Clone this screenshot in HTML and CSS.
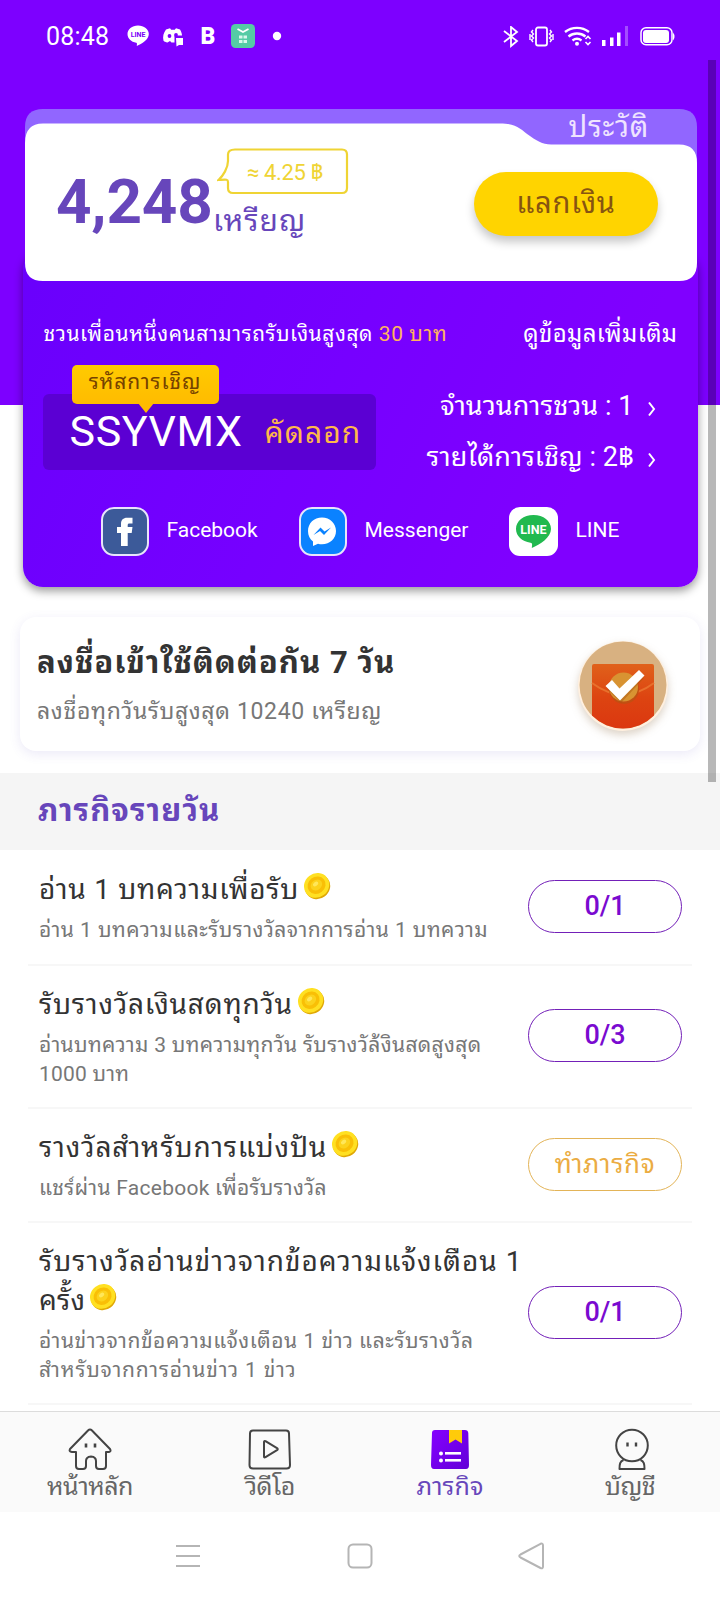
FILE: index.html
```html
<!DOCTYPE html>
<html lang="th">
<head>
<meta charset="utf-8">
<title>ภารกิจ</title>
<link rel="stylesheet" href="styles.css">
</head>
<body>
<svg class="defs" width="0" height="0">
  <defs>
    <symbol id="coin" viewBox="0 0 28 28">
      <ellipse cx="14.6" cy="14.8" rx="13" ry="12" transform="rotate(-38 14.6 14.8)" fill="#e0a806"/>
      <ellipse cx="13.6" cy="13.4" rx="13" ry="12" transform="rotate(-38 13.6 13.4)" fill="#ffe022"/>
      <ellipse cx="13.6" cy="13.2" rx="9.4" ry="8.4" transform="rotate(-38 13.6 13.2)" fill="#f9bf06"/>
      <ellipse cx="13.4" cy="13" rx="6.2" ry="5" transform="rotate(-38 13.4 13)" fill="#fcd21c"/>
      <ellipse cx="12.6" cy="12" rx="3" ry="2" transform="rotate(-38 12.6 12)" fill="#ffe75a"/>
    </symbol>
  </defs>
</svg>
<div class="phone">
  <header class="status">
    <span class="clock">08:48</span>
    <svg class="notes" width="156" height="26" viewBox="0 0 156 26" fill="#fff">
      <path d="M11 1.500C5 1.500.5 5.200.5 10c0 4.600 3.800 8 8.700 8.700 1 .2.800 1.500.6 3.300 5-2.200 12-6.500 12-12C21.800 5.200 17 1.500 11 1.500z"/>
      <text class="line-small" x="11" y="12.800" text-anchor="middle" fill="#7b00f8">LINE</text>
      <path d="M39 5.500l4-1.200 1.200 1.500h3.600L49 4.300l4 1.200c1.500 2.500 2 4.500 2 6h-7.500v7h-3l-1.500-1.500-2.500 1.500c-2-.5-3-.8-4-1.800C35.500 12.500 36.500 9 39 5.500z"/>
      <circle cx="42.500" cy="12" r="1.900" fill="#7b00ff"/><circle cx="49" cy="11" r="1.900" fill="#7b00ff"/>
      <path d="M49 14h7v7h-4l-2.500 1.500z"/>
      <text class="b-mark" x="73.500" y="20">B</text>
      <rect x="104" y="0" width="24" height="24" rx="4.500" fill="#55cba5"/>
      <path d="M110.500 5l5.500 3 5.500-3" fill="none" stroke="#fff" stroke-width="1.800"/>
      <g fill="#d9f7ec"><rect x="112" y="11.500" width="3.500" height="3"/><rect x="116.500" y="11.500" width="3.500" height="3"/><rect x="112" y="16" width="3.500" height="3"/><rect x="116.500" y="16" width="3.500" height="3"/></g>
      <circle cx="150" cy="12" r="4.200"/>
    </svg>
    <svg class="signals" width="174" height="22" viewBox="0 0 174 22" fill="none" stroke="#fff" stroke-width="1.800">
      <path d="M1 5l13 10-6 5V1l6 5L1 16"/>
      <rect x="33" y="1.500" width="11" height="18" rx="2"/>
      <path d="M30 4l-1.500 2 2 2-2 2 2 2-2 2 1.500 2M27 8v6M47 4l1.500 2-2 2 2 2-2 2 2 2L47 16M50 8v6" stroke-width="1.400"/>
      <path d="M62 6c7-5.500 17-5.500 24 0M65.500 10.500c5-4 12-4 17 0M69.500 14.500c3-2.200 6-2.200 9 0" stroke-width="2.400"/>
      <circle cx="74" cy="17.800" r="2" fill="#fff" stroke="none"/>
      <path d="M82.500 13l2.500-2.500 2.500 2.500M82.500 16l2.500 2.500 2.500-2.500" stroke-width="1.600"/>
      <g stroke="none" fill="#fff"><rect x="99" y="14" width="3.500" height="6"/><rect x="107" y="11.500" width="3.500" height="8.500"/><rect x="114" y="6.500" width="3.500" height="13.500"/><rect x="122" y="0" width="3" height="20" opacity=".3"/>
      <rect x="140" y="4" width="26" height="13" rx="3"/><path d="M170 6.500q3 4 0 8z"/></g>
      <rect x="138" y="1.800" width="31" height="17" rx="5" stroke-width="1.500"/>
    </svg>
  </header>

  <section class="wallet">
    <svg class="wallet-shape" width="672" height="172" viewBox="0 0 672 172">
      <path d="M0 100V18Q0 0 18 0H654Q672 0 672 18V100z" fill="#9166ff"/>
      <path d="M0 34Q0 14.500 18 14.500H475C492 14.500 495 20 505 27 515 34 519 35.500 530 35.500H654Q672 35.500 672 54V154Q672 172 654 172H18Q0 172 0 154z" fill="#fff"/>
    </svg>
    <a class="history"><span class="t-history">ประวัติ</span></a>
    <div class="balance">
      <strong class="amount">4,248</strong>
      <div class="worth">
        <div class="bubble">
          <svg class="bubble-shape" width="132" height="48" viewBox="0 0 132 48"><path d="M18 1.500H125Q130 1.500 130 6.500V40Q130 45 125 45H16Q11 45 11 40V34C11 31 9 31.500 1.500 32 6 28 11 20 11 13V6.500Q11 1.500 18 1.500z" fill="#fff" stroke="#efd434" stroke-width="2.200"/></svg>
          <span class="t-worth">≈ 4.25 ฿</span>
        </div>
        <div class="unit"><span class="t-unit">เหรียญ</span></div>
      </div>
      <a class="redeem"><span class="t-redeem">แลกเงิน</span></a>
    </div>
  </section>

  <section class="invite">
    <div class="invite-head">
      <p class="invite-note"><span class="t-note">ชวนเพื่อนหนึ่งคนสามารถรับเงินสูงสุด</span> <em class="t-baht">30 บาท</em></p>
      <a class="more"><span class="t-more">ดูข้อมูลเพิ่มเติม</span></a>
    </div>
    <div class="invite-main">
      <div class="codebox">
        <div class="tip"><span class="t-tip">รหัสการเชิญ</span></div>
        <span class="code">SSYVMX</span>
        <a class="copy"><span class="t-copy">คัดลอก</span></a>
      </div>
      <div class="stats">
        <a class="stat"><span class="t-stat1">จำนวนการชวน : 1</span><svg width="8" height="16" viewBox="0 0 8 16"><path d="M1 1.500l5 6.500-5 6.500" fill="none" stroke="#fff" stroke-width="2"/></svg></a>
        <a class="stat"><span class="t-stat2">รายได้การเชิญ : 2฿</span><svg width="8" height="16" viewBox="0 0 8 16"><path d="M1 1.500l5 6.500-5 6.500" fill="none" stroke="#fff" stroke-width="2"/></svg></a>
      </div>
    </div>
    <div class="shares">
      <a class="share fb"><svg width="48" height="49" viewBox="0 0 48 49"><rect x="1" y="1" width="46" height="47" rx="12" fill="#3c5a99" stroke="#e8e4fb" stroke-width="2"/><path d="M20 39V26h-4v-6h4v-3c0-4 2.300-6.200 6-6.200h5.500v5.700h-3c-1.400 0-1.800.6-1.800 1.800V20h4.800l-.8 6h-4v13z" fill="#fff"/></svg><span>Facebook</span></a>
      <a class="share ms"><svg width="48" height="49" viewBox="0 0 48 49"><rect x="1" y="1" width="46" height="47" rx="12" fill="#0a82ff" stroke="#e8e4fb" stroke-width="2"/><path d="M23 10.500C15 10.500 9 16.300 9 24c0 4.500 1.800 8 5 10.500V39l5-2.300c1.300.4 2.600.5 4 .5 8 0 14-5.700 14-13.200S31 10.500 23 10.500z" fill="#fff"/><path d="M14.500 28l7-7.500 4 4 6.500-4-7 7.500-4-4z" fill="#0a82ff"/></svg><span>Messenger</span></a>
      <a class="share ln"><svg width="49" height="49" viewBox="0 0 49 49"><rect width="49" height="49" rx="11" fill="#fff"/><path d="M24.500 8C14.500 8 7 14 7 22c0 7 6 12.500 14.500 13.800 2 .3 1.800 1.700 1.300 5.200C31 37.500 42 30.500 42 22 42 14 34.500 8 24.500 8z" fill="#21b94f"/><text class="line-logo" x="24.500" y="26.500" text-anchor="middle" fill="#fff">LINE</text></svg><span>LINE</span></a>
    </div>
  </section>

  <section class="checkin">
    <div>
      <h2><span class="t-check">ลงชื่อเข้าใช้ติดต่อกัน 7 วัน</span></h2>
      <p><span class="t-checksub">ลงชื่อทุกวันรับสูงสุด 10240 เหรียญ</span></p>
    </div>
    <svg class="envelope" width="90" height="92" viewBox="0 0 90 92">
      <defs><clipPath id="round"><circle cx="45" cy="45" r="43.500"/></clipPath><linearGradient id="env" x2="0" y2="1"><stop offset="0" stop-color="#e0611b"/><stop offset=".5" stop-color="#dd4411"/><stop offset="1" stop-color="#db3610"/></linearGradient></defs>
      <circle cx="45" cy="46" r="45" fill="#fff0df"/>
      <g clip-path="url(#round)"><rect width="90" height="92" fill="#d8b181"/><rect x="14" y="24" width="62" height="68" rx="2" fill="url(#env)"/><path d="M14 43Q45 66 76 43" fill="none" stroke="#e8702c" stroke-width="2"/></g>
      <circle cx="46" cy="49" r="15" fill="#c24f12"/><circle cx="45.500" cy="47" r="14.500" fill="#d89332"/>
      <path d="M29 49l7-6 7 7 17-18 6 6-23 25z" fill="#a8560f" opacity=".45"/><path d="M27.500 46l6.500-6 7.500 8.500L61 30l5.500 5.500-24.500 25z" fill="#fff"/>
    </svg>
  </section>

  <h3 class="section"><span class="t-section">ภารกิจรายวัน</span></h3>

  <main class="tasks">
    <article class="task r1">
      <div class="info"><h4><span class="t-a">อ่าน 1 บทความเพื่อรับ</span><svg class="coin"><use href="#coin"/></svg></h4>
      <p><span class="d-a">อ่าน 1 บทความและรับรางวัลจากการอ่าน 1 บทความ</span></p></div>
      <a class="pill">0/1</a>
    </article>
    <article class="task r2">
      <div class="info"><h4><span class="t-b">รับรางวัลเงินสดทุกวัน</span><svg class="coin"><use href="#coin"/></svg></h4>
      <p><span class="d-b">อ่านบทความ 3 บทความทุกวัน รับรางวัล้งินสดสูงสุด</span><br><span class="d-b2">1000 บาท</span></p></div>
      <a class="pill">0/3</a>
    </article>
    <article class="task r3">
      <div class="info"><h4><span class="t-c">รางวัลสำหรับการแบ่งปัน</span><svg class="coin"><use href="#coin"/></svg></h4>
      <p><span class="d-c">แชร์ผ่าน Facebook เพื่อรับรางวัล</span></p></div>
      <a class="pill todo"><span class="t-todo">ทำภารกิจ</span></a>
    </article>
    <article class="task r4">
      <div class="info"><h4><span class="t-d">รับรางวัลอ่านข่าวจากข้อความแจ้งเตือน 1</span><br><span class="t-d2">ครั้ง</span><svg class="coin"><use href="#coin"/></svg></h4>
      <p><span class="d-d">อ่านข่าวจากข้อความแจ้งเตือน 1 ข่าว และรับรางวัล</span><br><span class="d-d2">สำหรับจากการอ่านข่าว 1 ข่าว</span></p></div>
      <a class="pill">0/1</a>
    </article>
  </main>

  <nav class="tabs">
    <a class="tab"><svg width="46" height="46" viewBox="0 0 46 46" fill="none" stroke="#444" stroke-width="2" stroke-linejoin="round"><path d="M21 3.500q2-2 4 0L43 22q1.500 2.500-1 3h-3v14q0 3-3 3h-4q-3 0-3-3v-5q0-4-5-4.500-5 .5-5 4.500v5q0 3-3 3h-4q-3 0-3-3V25H5q-3.500-.5-2-3z"/><path d="M19 16.500v4M28 16.500v4" stroke-width="2.600"/></svg><span class="n-a">หน้าหลัก</span></a>
    <a class="tab"><svg width="46" height="46" viewBox="0 0 46 46" fill="none" stroke="#444" stroke-width="2" stroke-linejoin="round"><path d="M6 3.500H39Q42 3.500 42 6.500L43 38Q43 41.500 39.500 41.500H6Q2.500 41.500 2.500 38L3 6.500Q3 3.500 6 3.500z"/><path d="M17 15q0-1.500 1.500-.8l11.500 7q1.500 1 0 2l-11.500 7Q17 31 17 29.500z"/></svg><span class="n-b">วิดีโอ</span></a>
    <a class="tab on"><svg width="46" height="46" viewBox="0 0 46 46"><defs><linearGradient id="bk" x2="1" y2="1"><stop offset="0" stop-color="#8500ff"/><stop offset="1" stop-color="#6200d8"/></linearGradient></defs><path d="M8 3H38Q41 3 41.300 6L42 38Q42 42 39 42H7Q4 42 4 38L5 6Q5 3 8 3z" fill="url(#bk)"/><path d="M22 3H35V16.500L28.500 12.500 22 16.500z" fill="#ffcb0a"/><g fill="#fff"><circle cx="14" cy="26.500" r="2"/><circle cx="14" cy="33.500" r="2"/><rect x="18" y="25" width="16" height="2.600"/><rect x="18" y="32" width="16" height="2.600"/></g></svg><span class="n-c">ภารกิจ</span></a>
    <a class="tab"><svg width="46" height="46" viewBox="0 0 46 46" fill="none" stroke="#444" stroke-width="2" stroke-linejoin="round"><circle cx="25" cy="18.500" r="15.800"/><path d="M16.500 33C13 34.500 12.500 37 12.500 42H37.500C37.500 37 37 34.500 33.500 33"/><path d="M20.500 15.500v4M29 15.500v4" stroke-width="2.400"/></svg><span class="n-d">บัญชี</span></a>
  </nav>

  <footer class="sysnav">
    <svg width="26" height="26" viewBox="0 0 26 26" fill="none" stroke="#b5b5b5" stroke-width="2"><path d="M1 3H25M1 13H25M1 23H25"/></svg>
    <svg width="26" height="26" viewBox="0 0 26 26" fill="none" stroke="#b5b5b5" stroke-width="2"><rect x="1.500" y="1.500" width="23" height="23" rx="4.500"/></svg>
    <svg class="back" width="26" height="28" viewBox="0 0 26 28" fill="none" stroke="#b5b5b5" stroke-width="2" stroke-linejoin="round"><path d="M22.500 1.800Q25 .8 25 3.500V24.500Q25 27.200 22.500 26L2.500 15.500Q0 14 2.500 12.500z"/></svg>
  </footer>
  <div class="scrollbar"></div>
</div>
</body>
</html>
```
FILE: styles.css
```css
* { box-sizing: border-box; margin: 0; padding: 0; }
body { width: 720px; height: 1600px; overflow: hidden; font-family: Roboto, "Noto Sans Thai Looped", "Droid Sans Thai", Loma, Waree, Garuda, Umpush, "Noto Sans Thai", "Noto Sans", sans-serif; }
.defs { position: absolute; }
svg { display: block; flex: none; }
span, em { white-space: nowrap; }
.phone { position: relative; width: 720px; height: 1600px; display: flex; flex-direction: column; background: linear-gradient(#7d00ff 0 405px, #fff 405px); }
.status { display: flex; height: 109px; align-items: flex-start; padding: 24px 43px 0 46px; color: #fff; }
.clock { width: 81px; font-size: 25px; line-height: 25px; letter-spacing: .2px; }
.line-small { font: 700 7px Roboto, sans-serif; }
.b-mark { font: 900 23px Roboto, sans-serif; }
.signals { margin: 2px 0 0 auto; }

.wallet { position: relative; z-index: 1; margin: 0 0 0 25px; width: 672px; height: 172px; flex: none; }
.wallet-shape { position: absolute; inset: 0; z-index: -1; }
.history { display: flex; height: 36px; justify-content: flex-end; padding-right: 48px; color: #efe3ff; font-size: 29px; line-height: 37px; }
.t-history { letter-spacing: .8px; }
.balance { display: flex; height: 136px; padding-left: 31px; }
.amount { width: 154px; font-size: 62px; line-height: 70px; padding-top: 22px; letter-spacing: -.2px; color: #6746bb; }
.bubble { position: relative; display: flex; width: 132px; height: 48px; margin: 3px 0 0 7px; padding-left: 30px; font-size: 22px; line-height: 49px; letter-spacing: -.4px; color: #efd434; }
.bubble-shape { position: absolute; inset: 0; z-index: -1; }
.unit { padding-left: 3px; font-size: 30px; line-height: 36px; margin-top: 7px; letter-spacing: 1px; color: #6746bb; }
.redeem { display: flex; justify-content: center; width: 184px; height: 64px; margin: 27px 39px 0 auto; border-radius: 32px; background: #ffd400; color: #875411; font-size: 29px; line-height: 63px; letter-spacing: .8px; box-shadow: 0 6px 10px rgba(0,0,0,.22); }

.invite { flex: none; width: 675px; height: 337px; margin: -31px 0 0 22.5px; padding: 62px 20px 0; border-radius: 20px; color: #fff; background: linear-gradient(115deg, #6900fc, #7600ff 45%, #8000ff 80%); box-shadow: 0 4px 10px rgba(0,0,0,.4); }
.invite-head { display: flex; justify-content: space-between; height: 44px; line-height: 44px; }
.invite-note { padding-left: 1px; font-size: 21px; letter-spacing: .57px; }
.t-baht { font-style: normal; color: #ffb45c; }
.more { font-size: 24px; letter-spacing: .38px; }
.invite-main { display: flex; justify-content: space-between; height: 76px; margin-top: 38px; }
.codebox { position: relative; display: flex; width: 333px; height: 76px; padding-left: 27px; border-radius: 6px; background: #5b00d3; }
.tip { position: absolute; left: 29px; top: -29px; width: 147px; height: 39px; border-radius: 5px; background: linear-gradient(#ffcb00, #ffbb00); color: #754200; font-size: 21px; line-height: 34px; letter-spacing: .9px; text-align: center; }
.tip::after { content: ""; position: absolute; left: 66px; top: 38px; border: 8px solid transparent; border-top: 10px solid #ffbb00; border-bottom: 0; }
.code { width: 195px; font-size: 43px; line-height: 74px; letter-spacing: .6px; }
.copy { color: #ffb84a; font-size: 30px; line-height: 77px; letter-spacing: 1.1px; }
.stats { width: 260px; margin-top: -13px; }
.stat { display: flex; justify-content: flex-end; align-items: center; gap: 14px; height: 51px; padding-right: 22px; font-size: 27px; line-height: 51px; letter-spacing: .05px; }
.stat svg { margin-top: 5px; }
.shares { display: flex; margin: 37px 0 0 58px; font-size: 21px; }
.share { display: flex; align-items: center; gap: 18px; line-height: 46px; }
.share span { margin-top: -3px; }
.fb { width: 198px; }
.ms { width: 210px; }
.line-logo { font: 700 12.5px Roboto, sans-serif; }

.checkin { flex: none; display: flex; justify-content: space-between; width: 680px; height: 134px; margin: 30px 0 22px 20px; padding: 23px 32px 0 17px; border-radius: 16px; background: #fff; box-shadow: 0 3px 12px rgba(90,70,190,.12); }
.checkin h2 { font-size: 31px; line-height: 46px; letter-spacing: 1px; color: #333; }
.checkin p { font-size: 23px; line-height: 51px; letter-spacing: .65px; color: #777; }
.envelope { filter: drop-shadow(0 4px 4px rgba(120,80,30,.25)); }

.section { flex: none; height: 77px; padding-left: 38px; background: #f5f5f5; color: #6746bb; font-size: 31px; line-height: 76px; letter-spacing: 1.05px; }

.tasks { flex: none; height: 561px; padding: 1px 28px 0; background: #fff; }
.task { display: flex; align-items: center; justify-content: space-between; padding: 0 10px 0 11px; border-bottom: 2px solid #f7f7f7; }
.r1 { height: 115px; } .r2 { height: 143px; } .r3 { height: 114px; } .r4 { height: 182px; }
.info { width: 482px; }
.task h4 { font-weight: 400; font-size: 28px; line-height: 39px; color: #333; }
.task p { margin-top: 7px; font-size: 21px; line-height: 29px; color: #777; }
.t-a { letter-spacing: .72px; }
.t-b { letter-spacing: .78px; }
.t-c { letter-spacing: .85px; }
.t-d { letter-spacing: 1px; }
.t-d2 { letter-spacing: .3px; }
.d-a { letter-spacing: .46px; }
.d-b { letter-spacing: .35px; }
.d-b2 { letter-spacing: .2px; }
.d-c { letter-spacing: .27px; }
.d-d { letter-spacing: .53px; }
.d-d2 { letter-spacing: .82px; }
.coin { display: inline-block; width: 28px; height: 28px; margin-left: 4px; vertical-align: -1px; }
.pill { flex: none; width: 154px; height: 53px; margin-bottom: 2px; border: 1.500px solid #7320b8; border-radius: 27px; text-align: center; font-size: 27px; font-weight: 500; line-height: 51px; color: #7a0ad0; }
.todo { border-color: #e3b458; color: #ebac42; font-size: 26px; font-weight: 400; line-height: 50px; letter-spacing: .6px; }

.tabs { flex: none; display: grid; grid-template-columns: repeat(4, 180px); height: 101px; margin-top: 1px; border-top: 1px solid #dcdcdc; background: #fafafa; color: #666; font-size: 25px; }
.tasks { height: 560px; }
.tab { display: flex; flex-direction: column; align-items: center; padding-top: 15px; line-height: 30px; }
.tab span { margin-top: -1px; letter-spacing: -.5px; }
.tab .n-c { letter-spacing: .1px; }
.on { color: #6746bb; }

.sysnav { display: grid; grid-template-columns: 28px 1fr 28px; align-items: center; justify-items: center; height: 88px; padding: 0 174px; background: #fff; }
.back { margin-left: -2px; }
.scrollbar { position: absolute; left: 708px; top: 60px; width: 8px; height: 722px; background: rgba(0,0,0,.28); z-index: 3; }
```
